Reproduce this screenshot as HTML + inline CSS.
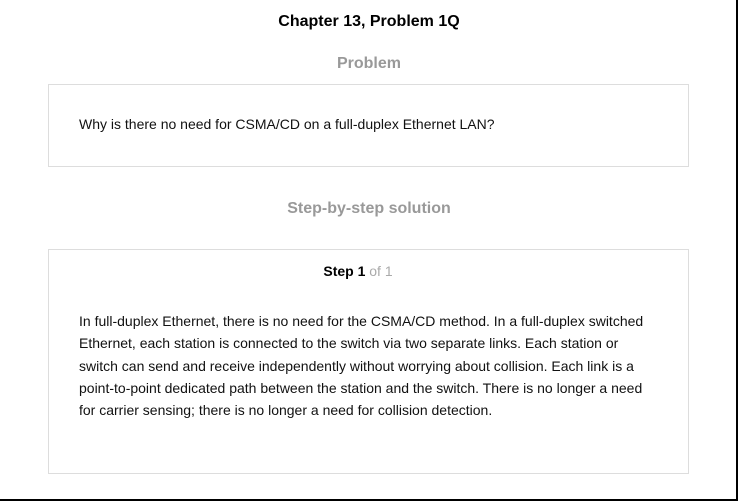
<!DOCTYPE html>
<html><head><style>
html,body{margin:0;padding:0;background:#fff}
body{width:738px;height:501px;position:relative;overflow:hidden;font-family:"Liberation Sans",Arial,sans-serif;color:#111}
.frame{position:absolute;left:0;top:0;width:736px;height:499px;border-right:2px solid #000;border-bottom:2px solid #000}
.t{position:absolute;left:0;width:738px;text-align:center;font-weight:bold}
.box{position:absolute;left:48px;width:639px;border:1px solid #ddd;background:#fff}
.p{position:absolute;left:79px;font-size:14px;line-height:22.3px;width:578px}
</style></head><body>
<div class="frame"></div>
<div class="t" style="top:13px;font-size:16px;color:#000">Chapter 13, Problem 1Q</div>
<div class="t" style="top:55px;font-size:16px;color:#999">Problem</div>
<div class="box" style="top:84px;height:81px"></div>
<div class="p" style="top:113px">Why is there no need for CSMA/CD on a full-duplex Ethernet LAN?</div>
<div class="t" style="top:200px;font-size:16px;color:#999">Step-by-step solution</div>
<div class="box" style="top:249px;height:223px"></div>
<div class="t" style="top:263px;left:-11px;font-size:14px;color:#000">Step 1 <span style="font-weight:normal;color:#aaa">of 1</span></div>
<div class="p" style="top:310px">In full-duplex Ethernet, there is no need for the CSMA/CD method. In a full-duplex switched Ethernet, each station is connected to the switch via two separate links. Each station or switch can send and receive independently without worrying about collision. Each link is a point-to-point dedicated path between the station and the switch. There is no longer a need for carrier sensing; there is no longer a need for collision detection.</div>
</body></html>
